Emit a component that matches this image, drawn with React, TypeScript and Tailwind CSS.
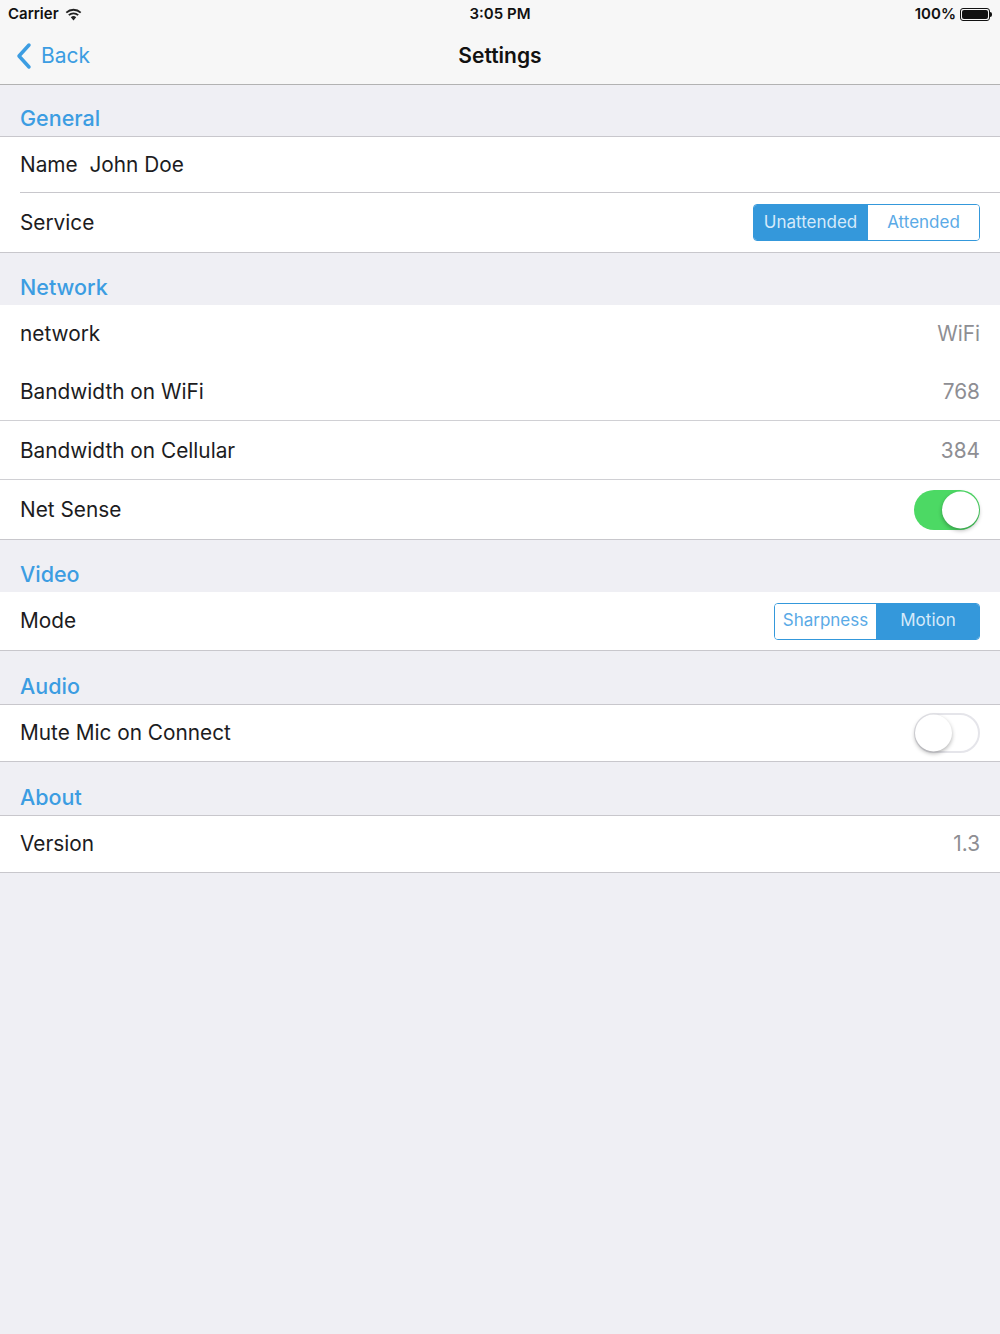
import React from "react";

const font = { fontFamily: "Inter, 'Liberation Sans', sans-serif" };

function Header({ title, border = true, h = "h-[52px]" }: { title: string; border?: boolean; h?: string }) {
  return (
    <div className={`${h} flex items-end px-5 pb-[5px] ${border ? "border-b border-[#c8c7cc]" : ""}`}>
      <span className="text-[21.5px] leading-[26px] font-medium text-[#3c9de2]">{title}</span>
    </div>
  );
}

function Row({
  label,
  right,
  h = "h-[58px]",
  sep,
}: {
  label: React.ReactNode;
  right?: React.ReactNode;
  h?: string;
  sep?: "inset" | "full" | "none";
}) {
  return (
    <div className={`relative ${h} flex items-center justify-between pl-5 pr-5 bg-white`}>
      <span className="text-[20.8px] text-[#1c1c1e]">{label}</span>
      {right}
      {sep === "inset" && <div className="absolute bottom-0 left-5 right-0 h-px bg-[#c8c7cc]" />}
      {sep === "full" && <div className="absolute bottom-0 left-0 right-0 h-px bg-[#d0d0d4]" />}
    </div>
  );
}

function Value({ v }: { v: string }) {
  return <span className="text-[20.8px] text-[#8e8e93]">{v}</span>;
}

function Segmented({ items, active, widths }: { items: string[]; active: number; widths: string[] }) {
  return (
    <div className="flex h-[37px] rounded-[4px] border border-[#3498db] overflow-hidden">
      {items.map((it, i) => (
        <div
          key={it}
          className={`${widths[i]} flex items-center justify-center text-[17px] ${
            i === active ? "bg-[#3498db] text-[#d6eafa]" : "bg-white text-[#5aaae6]"
          } ${i > 0 ? "border-l border-[#3498db]" : ""}`}
        >
          {it}
        </div>
      ))}
    </div>
  );
}

function Toggle({ on }: { on: boolean }) {
  return (
    <div
      className={`relative w-[66px] h-[40px] rounded-full ${
        on ? "bg-[#4cd964]" : "bg-white border-[2px] border-[#e5e5ea]"
      }`}
    >
      <div
        className={`absolute top-1/2 -translate-y-1/2 w-[37px] h-[37px] rounded-full bg-white shadow-[0_2px_4px_rgba(0,0,0,0.3)] ${
          on ? "right-[1px]" : "left-[-1px]"
        }`}
      />
    </div>
  );
}

export default function App() {
  return (
    <div style={font} className="w-[1000px] h-[1334px] bg-[#efeff4] overflow-hidden">
      {/* status + nav */}
      <div className="bg-[#f7f7f7] border-b border-[#b2b2b2]">
        <div className="h-[28px] flex items-center justify-between px-2 text-[15px] font-semibold text-[#111]">
          <div className="flex items-center gap-[6px] w-[200px]">
            <span>Carrier</span>
            <svg width="17" height="13" viewBox="0 0 17 13">
              <path d="M8.5 12.5 L5.8 9.3 A4 4 0 0 1 11.2 9.3 Z" fill="#222" />
              <path d="M3.8 7.2 A6.8 6.8 0 0 1 13.2 7.2" stroke="#222" strokeWidth="1.8" fill="none" />
              <path d="M1.3 4.6 A10.5 10.5 0 0 1 15.7 4.6" stroke="#222" strokeWidth="1.8" fill="none" />
            </svg>
          </div>
          <span>3:05 PM</span>
          <div className="flex items-center justify-end gap-[4px] w-[200px]">
            <span>100%</span>
            <div className="flex items-center">
              <div className="w-[30px] h-[13px] rounded-[3px] border border-[#111] p-[1px]">
                <div className="w-full h-full bg-[#111] rounded-[2px]" />
              </div>
              <div className="w-[2px] h-[5px] bg-[#111] rounded-r" />
            </div>
          </div>
        </div>
        <div className="h-[56px] relative flex items-center justify-center">
          <div className="absolute left-[15px] top-0 bottom-0 flex items-center gap-[8px] text-[#3c9de2]">
            <svg width="18" height="28" viewBox="0 0 18 28">
              <path d="M14 3 L4 14 L14 25" stroke="#3c9de2" strokeWidth="3.5" fill="none" strokeLinecap="round" strokeLinejoin="round" />
            </svg>
            <span className="text-[21px]">Back</span>
          </div>
          <span className="text-[21px] font-semibold text-[#111]">Settings</span>
        </div>
      </div>

      <Header title="General" />
      <div className="border-b border-[#c8c7cc]">
        <Row label={<>Name&nbsp;&nbsp;John Doe</>} h="h-[56px]" sep="inset" />
        <Row
          label="Service"
          h="h-[59px]"
          right={<Segmented items={["Unattended", "Attended"]} active={0} widths={["w-[113px]", "w-[112px]"]} />}
        />
      </div>

      <Header title="Network" border={false} />
      <div className="border-b border-[#c8c7cc]">
        <Row label="network" right={<Value v="WiFi" />} />
        <Row label="Bandwidth on WiFi" right={<Value v="768" />} sep="full" />
        <Row label="Bandwidth on Cellular" h="h-[59px]" right={<Value v="384" />} sep="full" />
        <Row label="Net Sense" h="h-[59px]" right={<Toggle on />} />
      </div>

      <Header title="Video" border={false} />
      <div className="border-b border-[#c8c7cc]">
        <Row
          label="Mode"
          right={<Segmented items={["Sharpness", "Motion"]} active={1} widths={["w-[101px]", "w-[103px]"]} />}
        />
      </div>

      <Header title="Audio" h="h-[54px]" />
      <div className="border-b border-[#c8c7cc]">
        <Row label="Mute Mic on Connect" h="h-[56px]" right={<Toggle on={false} />} />
      </div>

      <Header title="About" h="h-[54px]" />
      <div className="border-b border-[#c8c7cc]">
        <Row label="Version" h="h-[56px]" right={<Value v="1.3" />} />
      </div>
    </div>
  );
}
